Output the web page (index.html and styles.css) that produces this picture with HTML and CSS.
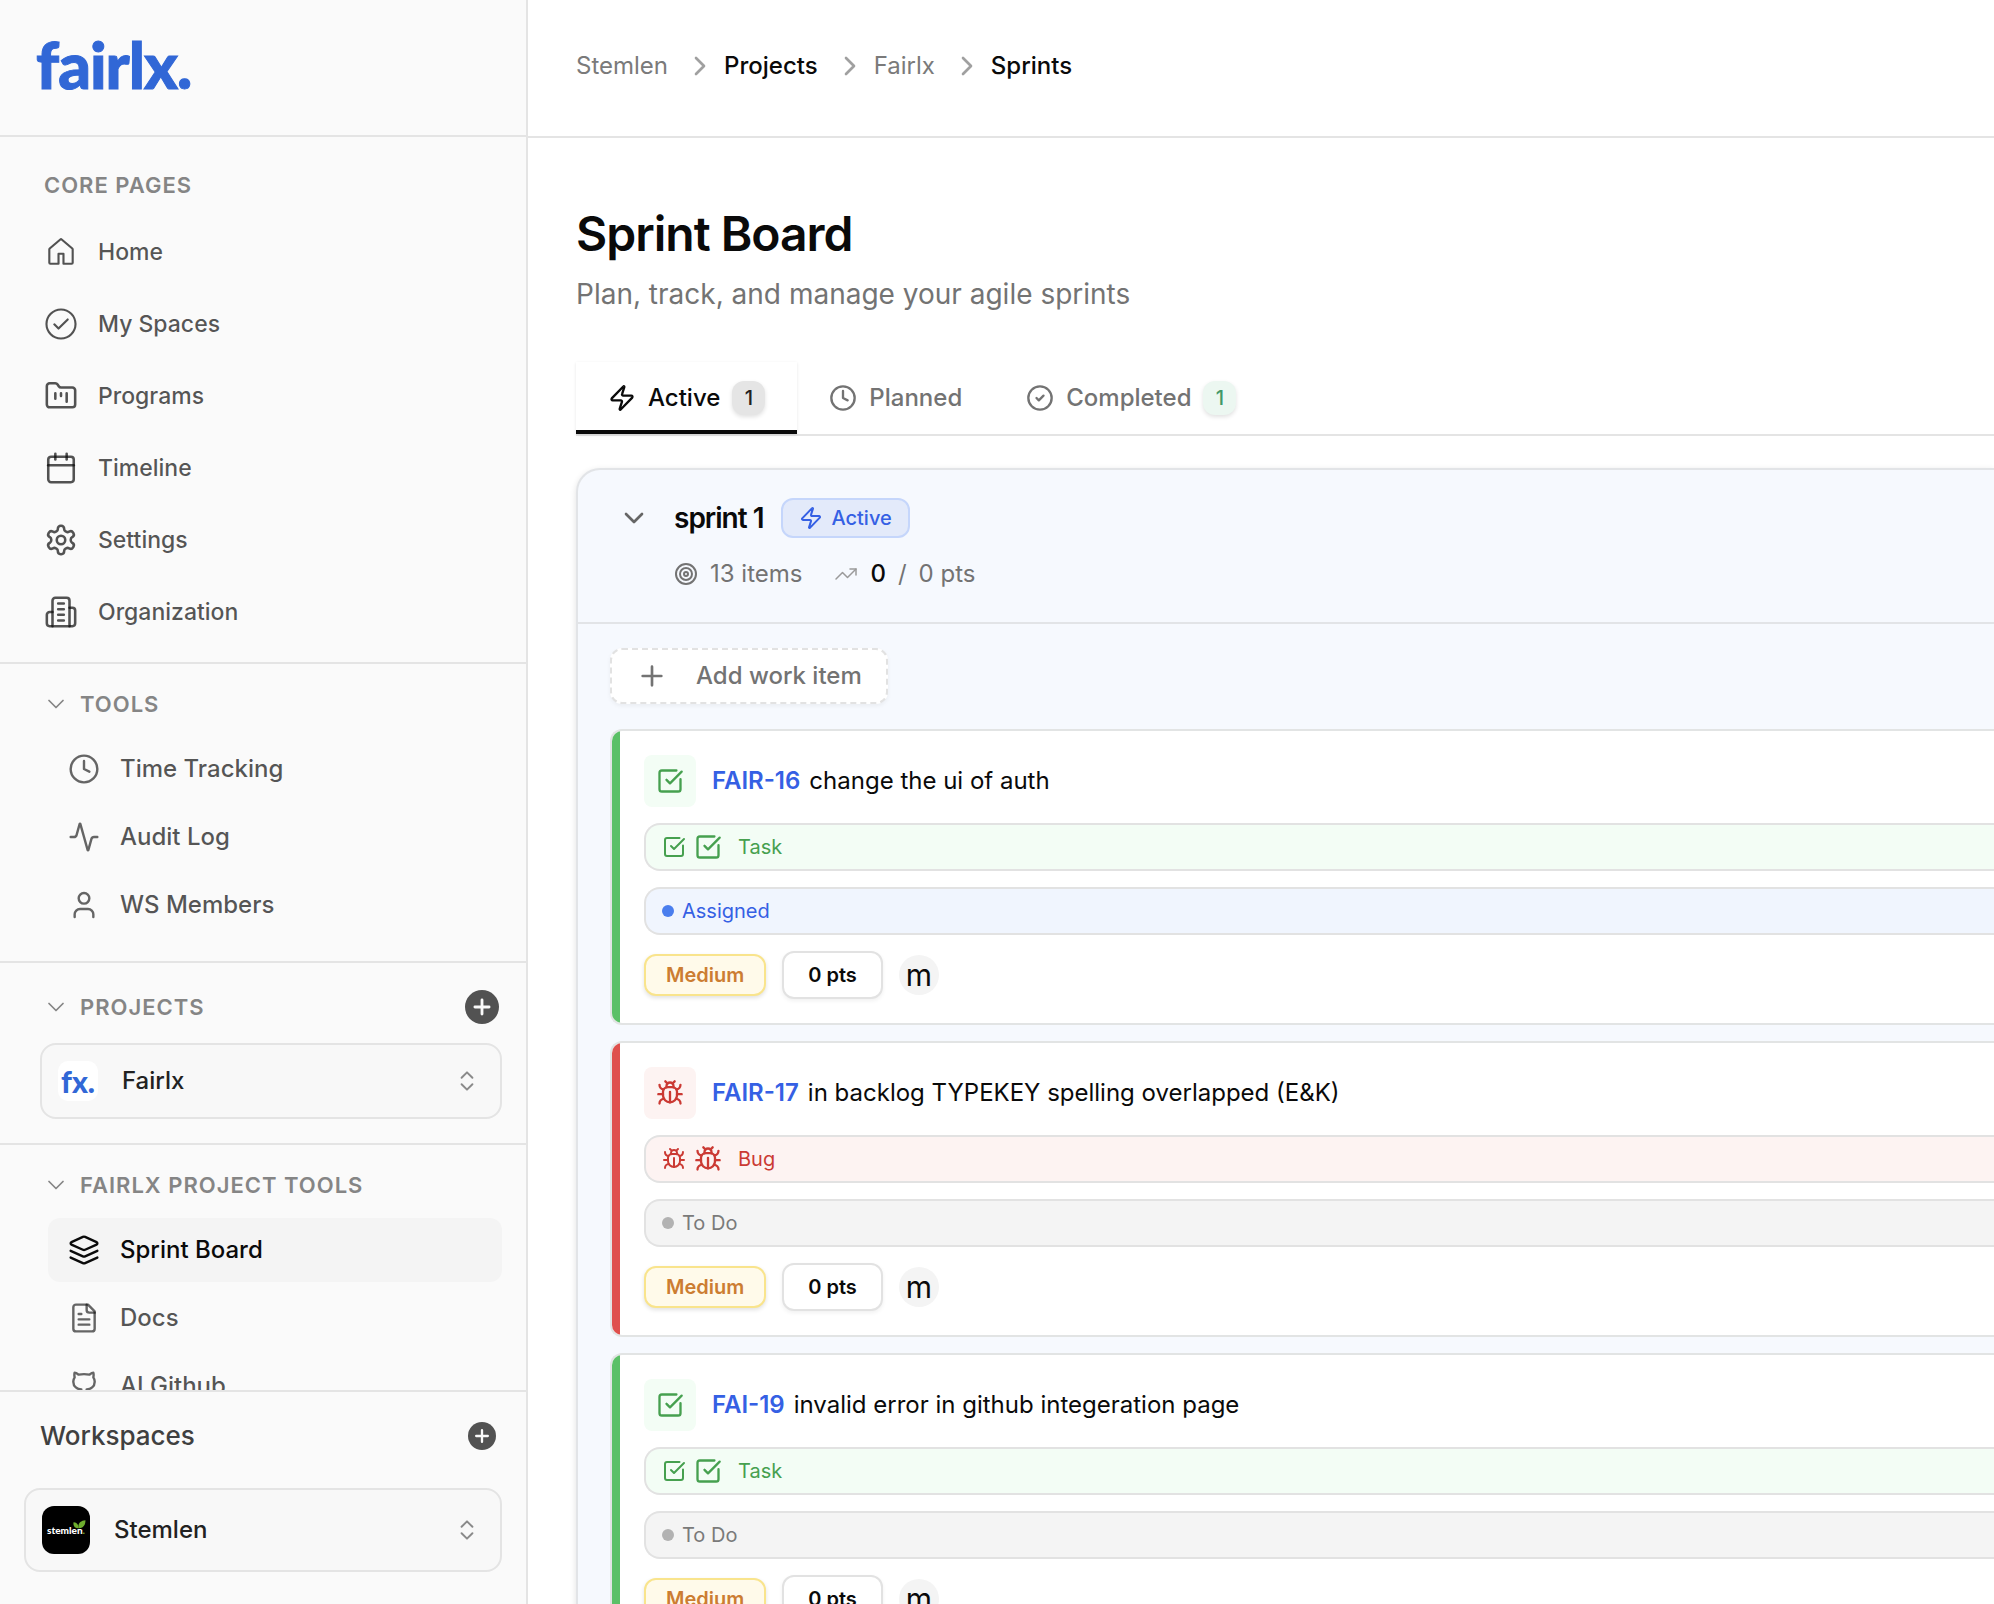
FILE: index.html
```html
<!DOCTYPE html>
<html lang="en">
	<head>
		<meta charset="UTF-8">
		<meta name="viewport" content="width=device-width, initial-scale=1">
		<title>Fairlx - Sprint Board</title>
		<link rel="stylesheet" href="styles.css">
	</head>
	<body>
		<!-- icon set -->
		<svg class="sprite" aria-hidden="true">
			<symbol id="home" viewBox="0 0 24 24"><path class="solid" d="M11.03 2.59a1.501 1.501 0 0 1 1.94 0l7.5 6.363a1.5 1.5 0 0 1 .53 1.144V19.5a1.5 1.5 0 0 1-1.5 1.5h-5.75a.75.75 0 0 1-.75-.75V14h-2v6.25a.75.75 0 0 1-.75.75H4.5A1.5 1.5 0 0 1 3 19.5v-9.403c0-.44.194-.859.53-1.144ZM12 3.734l-7.5 6.363V19.5h5v-6.25a.75.75 0 0 1 .75-.75h3.5a.75.75 0 0 1 .75.75v6.25h5v-9.403Z"/></symbol>
			<symbol id="check-round" viewBox="0 0 24 24"><path class="solid" d="M17.28 9.28a.75.75 0 0 0-1.06-1.06l-5.97 5.97-2.47-2.47a.75.75 0 0 0-1.06 1.06l3 3a.75.75 0 0 0 1.06 0l6.5-6.5Z"/><path class="solid" d="M12 1c6.075 0 11 4.925 11 11s-4.925 11-11 11S1 18.075 1 12 5.925 1 12 1ZM2.5 12a9.5 9.5 0 0 0 9.5 9.5 9.5 9.5 0 0 0 9.5-9.5A9.5 9.5 0 0 0 12 2.5 9.5 9.5 0 0 0 2.5 12Z"/></symbol>
			<symbol id="folder" viewBox="0 0 24 24"><path d="M4 20h16a2 2 0 0 0 2-2V8a2 2 0 0 0-2-2h-7.93a2 2 0 0 1-1.66-.9l-.82-1.2A2 2 0 0 0 7.93 3H4a2 2 0 0 0-2 2v13c0 1.1.9 2 2 2Z"/><path d="M8 10v4M12 10v2M16 10v6"/></symbol>
			<symbol id="calendar" viewBox="0 0 24 24"><path d="M8 2v4"/><path d="M16 2v4"/><rect x="3" y="4" width="18" height="18" rx="2"/><path d="M3 10h18"/></symbol>
			<symbol id="settings" viewBox="0 0 24 24"><path d="M12.22 2h-.44a2 2 0 0 0-2 2v.18a2 2 0 0 1-1 1.73l-.43.25a2 2 0 0 1-2 0l-.15-.08a2 2 0 0 0-2.73.73l-.22.38a2 2 0 0 0 .73 2.73l.15.1a2 2 0 0 1 1 1.72v.51a2 2 0 0 1-1 1.74l-.15.09a2 2 0 0 0-.73 2.73l.22.38a2 2 0 0 0 2.73.73l.15-.08a2 2 0 0 1 2 0l.43.25a2 2 0 0 1 1 1.73V20a2 2 0 0 0 2 2h.44a2 2 0 0 0 2-2v-.18a2 2 0 0 1 1-1.73l.43-.25a2 2 0 0 1 2 0l.15.08a2 2 0 0 0 2.73-.73l.22-.39a2 2 0 0 0-.73-2.73l-.15-.08a2 2 0 0 1-1-1.74v-.5a2 2 0 0 1 1-1.74l.15-.09a2 2 0 0 0 .73-2.73l-.22-.38a2 2 0 0 0-2.73-.73l-.15.08a2 2 0 0 1-2 0l-.43-.25a2 2 0 0 1-1-1.73V4a2 2 0 0 0-2-2z"/><circle cx="12" cy="12" r="3"/></symbol>
			<symbol id="building" viewBox="0 0 24 24"><path d="M6 22V4a2 2 0 0 1 2-2h8a2 2 0 0 1 2 2v18Z"/><path d="M6 12H4a2 2 0 0 0-2 2v6a2 2 0 0 0 2 2h2"/><path d="M18 9h2a2 2 0 0 1 2 2v9a2 2 0 0 1-2 2h-2"/><path d="M10 6h4M10 10h4M10 14h4M10 18h4"/></symbol>
			<symbol id="clock" viewBox="0 0 24 24"><circle cx="12" cy="12" r="10"/><path d="M12 6v6l4 2"/></symbol>
			<symbol id="activity" viewBox="0 0 24 24"><path d="M22 12h-2.48a2 2 0 0 0-1.93 1.46l-2.35 8.36a.25.25 0 0 1-.48 0L9.24 2.18a.25.25 0 0 0-.48 0l-2.35 8.36A2 2 0 0 1 4.49 12H2"/></symbol>
			<symbol id="user" viewBox="0 0 24 24"><path d="M19 21v-2a4 4 0 0 0-4-4H9a4 4 0 0 0-4 4v2"/><circle cx="12" cy="7" r="4"/></symbol>
			<symbol id="layers" viewBox="0 0 24 24"><path d="M12.83 2.18a2 2 0 0 0-1.66 0L2.6 6.08a1 1 0 0 0 0 1.83l8.58 3.91a2 2 0 0 0 1.66 0l8.58-3.9a1 1 0 0 0 0-1.83Z"/><path d="M22 17.65l-9.17 4.16a2 2 0 0 1-1.66 0L2 17.65"/><path d="M22 12.65l-9.17 4.16a2 2 0 0 1-1.66 0L2 12.65"/></symbol>
			<symbol id="file" viewBox="0 0 24 24"><path d="M15 2H6a2 2 0 0 0-2 2v16a2 2 0 0 0 2 2h12a2 2 0 0 0 2-2V7Z"/><path d="M14 2v4a2 2 0 0 0 2 2h4"/><path d="M10 9H8M16 13H8M16 17H8"/></symbol>
			<symbol id="github" viewBox="0 0 24 24"><path d="M15 22v-4a4.8 4.8 0 0 0-1-3.5c3 0 6-2 6-5.5.08-1.25-.27-2.48-1-3.5.28-1.15.28-2.35 0-3.5 0 0-1 0-3 1.5-2.64-.5-5.36-.5-8 0C6 2 5 2 5 2c-.3 1.15-.3 2.35 0 3.5A5.403 5.403 0 0 0 4 9c0 3.5 3 5.5 6 5.5-.39.49-.68 1.05-.85 1.65-.17.6-.22 1.23-.15 1.85v4"/><path d="M9 18c-4.51 2-5-2-7-2"/></symbol>
			<symbol id="down" viewBox="0 0 24 24"><path d="M6 9l6 6 6-6"/></symbol>
			<symbol id="right" viewBox="0 0 24 24"><path d="M9 18l6-6-6-6"/></symbol>
			<symbol id="updown" viewBox="0 0 24 24"><path d="M7 15l5 5 5-5M7 9l5-5 5 5"/></symbol>
			<symbol id="plus" viewBox="0 0 24 24"><path d="M5 12h14M12 5v14"/></symbol>
			<symbol id="plus-disc" viewBox="0 0 24 24"><circle class="solid" cx="12" cy="12" r="12"/><path class="cross" d="M7 12h10M12 7v10"/></symbol>
			<symbol id="zap" viewBox="0 0 24 24"><path d="M4 14a1 1 0 0 1-.78-1.63l9.9-10.2a.5.5 0 0 1 .86.46l-1.92 6.02A1 1 0 0 0 13 10h7a1 1 0 0 1 .78 1.63l-9.9 10.2a.5.5 0 0 1-.86-.46l1.92-6.02A1 1 0 0 0 11 14z"/></symbol>
			<symbol id="done" viewBox="0 0 24 24"><circle cx="12" cy="12" r="10"/><path d="M9 12l2 2 4-4"/></symbol>
			<symbol id="target" viewBox="0 0 24 24"><circle cx="12" cy="12" r="10"/><circle cx="12" cy="12" r="6"/><circle cx="12" cy="12" r="2"/></symbol>
			<symbol id="trend" viewBox="0 0 24 24"><path d="M22 7l-8.5 8.5-5-5L2 17"/><path d="M16 7h6v6"/></symbol>
			<symbol id="task" viewBox="0 0 24 24"><path d="M21 10.5V19a2 2 0 0 1-2 2H5a2 2 0 0 1-2-2V5a2 2 0 0 1 2-2h12.5"/><path d="M9 11l3 3L22 4"/></symbol>
			<symbol id="bug" viewBox="0 0 24 24"><path d="M8 2l1.88 1.88M14.12 3.88L16 2M9 7.13v-1a3.003 3.003 0 1 1 6 0v1"/><path d="M12 20c-3.3 0-6-2.7-6-6v-3a4 4 0 0 1 4-4h4a4 4 0 0 1 4 4v3c0 3.3-2.7 6-6 6"/><path d="M12 20v-9M6.53 9C4.6 8.8 3 7.1 3 5M6 13H2M3 21c0-2.1 1.7-3.9 3.8-4M20.97 5c0 2.1-1.6 3.8-3.5 4M22 13h-4M17.2 17c2.1.1 3.8 1.9 3.8 4"/></symbol>
		</svg>

		<div class="app">
			<aside class="sidebar">
				<div class="side-head">
					<a href="#" class="logo">fairlx.</a>
				</div>
				<div class="side-scroll">
					<nav class="core">
						<h2 class="label">CORE PAGES</h2>
						<ul>
							<li><a href="#"><svg class="icon"><use href="#home"/></svg>Home</a></li>
							<li><a href="#"><svg class="icon"><use href="#check-round"/></svg>My Spaces</a></li>
							<li><a href="#"><svg class="icon"><use href="#folder"/></svg>Programs</a></li>
							<li><a href="#"><svg class="icon"><use href="#calendar"/></svg>Timeline</a></li>
							<li><a href="#"><svg class="icon"><use href="#settings"/></svg>Settings</a></li>
							<li><a href="#"><svg class="icon"><use href="#building"/></svg>Organization</a></li>
						</ul>
					</nav>
					<section class="group">
						<button class="label toggle"><svg class="icon"><use href="#down"/></svg>TOOLS</button>
						<ul class="sub">
							<li><a href="#"><svg class="icon"><use href="#clock"/></svg>Time Tracking</a></li>
							<li><a href="#"><svg class="icon"><use href="#activity"/></svg>Audit Log</a></li>
							<li><a href="#"><svg class="icon"><use href="#user"/></svg>WS Members</a></li>
						</ul>
					</section>
					<section class="group projects">
						<div class="row">
							<button class="label toggle"><svg class="icon"><use href="#down"/></svg>PROJECTS</button>
							<button class="add" aria-label="New project"><svg class="icon"><use href="#plus-disc"/></svg></button>
						</div>
						<div class="picker">
							<span class="mark fx">fx.</span>
							<select aria-label="Project"><option>Fairlx</option></select>
							<svg class="icon"><use href="#updown"/></svg>
						</div>
					</section>
					<section class="group">
						<button class="label toggle"><svg class="icon"><use href="#down"/></svg>FAIRLX PROJECT TOOLS</button>
						<ul class="sub">
							<li><a href="#" class="on"><svg class="icon"><use href="#layers"/></svg>Sprint Board</a></li>
							<li><a href="#"><svg class="icon"><use href="#file"/></svg>Docs</a></li>
							<li><a href="#"><svg class="icon"><use href="#github"/></svg>AI Github</a></li>
						</ul>
					</section>
				</div>
				<div class="side-foot">
					<div class="row">
						<label for="workspace">Workspaces</label>
						<button class="add small" aria-label="New workspace"><svg class="icon"><use href="#plus-disc"/></svg></button>
					</div>
					<div class="picker large">
						<span class="mark stemlen">
							stemlen<i>.</i>
							<svg class="leaf" viewBox="0 0 24 16"><path d="M10 15C3 15 0 11 1 4c6 0 9 4 9 11z"/><path d="M10 15C9 6 13 1 23 0c0 9-4 15-13 15z"/></svg>
						</span>
						<select id="workspace"><option>Stemlen</option></select>
						<svg class="icon"><use href="#updown"/></svg>
					</div>
				</div>
			</aside>

			<main>
				<header class="topbar">
					<ol class="crumbs">
						<li><a href="#">Stemlen</a></li>
						<li><svg class="icon"><use href="#right"/></svg><a href="#" class="strong">Projects</a></li>
						<li><svg class="icon"><use href="#right"/></svg><a href="#">Fairlx</a></li>
						<li><svg class="icon"><use href="#right"/></svg><a href="#" class="strong">Sprints</a></li>
					</ol>
				</header>
				<div class="content">
					<h1>Sprint Board</h1>
					<p class="lead">Plan, track, and manage your agile sprints</p>
					<div class="tabs" role="tablist">
						<button role="tab" aria-selected="true"><svg class="icon"><use href="#zap"/></svg>Active<span class="count">1</span></button>
						<button role="tab"><svg class="icon"><use href="#clock"/></svg>Planned</button>
						<button role="tab"><svg class="icon"><use href="#done"/></svg>Completed<span class="count green">1</span></button>
					</div>

					<section class="sprint">
						<div class="sprint-head">
							<button class="fold" aria-label="Collapse sprint"><svg class="icon"><use href="#down"/></svg></button>
							<div>
								<div class="sprint-title">
									<h2>sprint 1</h2>
									<span class="state"><svg class="icon"><use href="#zap"/></svg>Active</span>
								</div>
								<div class="stats">
									<svg class="icon"><use href="#target"/></svg><span>13 items</span>
									<svg class="icon trend"><use href="#trend"/></svg><b>0</b><span>/</span><span>0 pts</span>
								</div>
							</div>
						</div>
						<div class="sprint-body">
							<button class="add-item"><svg class="icon"><use href="#plus"/></svg>Add work item</button>

							<article class="item task">
								<div class="item-title">
									<span class="tile"><svg class="icon"><use href="#task"/></svg></span>
									<a href="#">FAIR-16</a>
									<h3>change the ui of auth</h3>
								</div>
								<button class="field type"><svg class="icon"><use href="#task"/></svg><svg class="icon big"><use href="#task"/></svg>Task</button>
								<button class="field assigned"><i class="dot"></i>Assigned</button>
								<div class="meta">
									<span class="priority">Medium</span>
									<button class="points">0 pts</button>
									<span class="avatar">m</span>
								</div>
							</article>

							<article class="item bug">
								<div class="item-title">
									<span class="tile"><svg class="icon"><use href="#bug"/></svg></span>
									<a href="#">FAIR-17</a>
									<h3>in backlog TYPEKEY spelling overlapped (E&amp;K)</h3>
								</div>
								<button class="field type"><svg class="icon"><use href="#bug"/></svg><svg class="icon big"><use href="#bug"/></svg>Bug</button>
								<button class="field todo"><i class="dot"></i>To Do</button>
								<div class="meta">
									<span class="priority">Medium</span>
									<button class="points">0 pts</button>
									<span class="avatar">m</span>
								</div>
							</article>

							<article class="item task">
								<div class="item-title">
									<span class="tile"><svg class="icon"><use href="#task"/></svg></span>
									<a href="#">FAI-19</a>
									<h3>invalid error in github integeration page</h3>
								</div>
								<button class="field type"><svg class="icon"><use href="#task"/></svg><svg class="icon big"><use href="#task"/></svg>Task</button>
								<button class="field todo"><i class="dot"></i>To Do</button>
								<div class="meta">
									<span class="priority">Medium</span>
									<button class="points">0 pts</button>
									<span class="avatar">m</span>
								</div>
							</article>
						</div>
					</section>
				</div>
			</main>
		</div>
	</body>
</html>
```
FILE: styles.css
```css
*{
	margin: 0;
	padding: 0;
	box-sizing: border-box;
}
body{
	font-family: Inter, "Liberation Sans", sans-serif;
	font-size: 24px;
	line-height: 32px;
	color: #0a0a0a;
	background: #fff;
}
ul,ol{
	list-style: none;
}
a{
	color: inherit;
	text-decoration: none;
}
button,select{
	font: inherit;
	color: inherit;
	border: 0;
	background: none;
	cursor: pointer;
}
.sprite{
	display: none;
}
.icon{
	width: 28px;
	height: 28px;
	flex: none;
	fill: none;
	stroke: currentColor;
	stroke-width: 2;
	stroke-linecap: round;
	stroke-linejoin: round;
}
.solid{
	fill: currentColor;
	stroke: none;
}
.cross{
	stroke: #fafafa;
}
.app{
	display: flex;
	height: 100vh;
	overflow: hidden;
}

/* sidebar */
.sidebar{
	width: 528px;
	flex: none;
	display: flex;
	flex-direction: column;
	background: #fafafa;
	border-right: 2px solid #e4e4e4;
}
.side-head{
	height: 137px;
	flex: none;
	display: flex;
	align-items: center;
	padding: 0 36px 6px;
	border-bottom: 2px solid #e4e4e4;
}
.logo{
	font-family: Lato, sans-serif;
	font-size: 64px;
	line-height: 80px;
	font-weight: 900;
	letter-spacing: -1px;
	color: #3167d6;
	-webkit-text-stroke: 1px #3167d6;
}
.side-scroll{
	flex: 1;
	min-height: 0;
	overflow: hidden;
}
.label{
	font-size: 22px;
	line-height: 32px;
	font-weight: 600;
	letter-spacing: 1px;
	color: #858585;
}
.core{
	padding: 32px 24px 14px 44px;
}
.core ul{
	margin-top: 15px;
}
.core a{
	display: flex;
	align-items: center;
	gap: 20px;
	height: 72px;
	font-size: 23px;
	font-weight: 500;
	color: rgba(10,10,10,.7);
}
.core .icon{
	width: 34px;
	height: 34px;
	stroke-width: 1.8;
}
.group{
	padding: 24px 24px 24px 48px;
	border-top: 2px solid #e4e4e4;
}
.toggle{
	display: flex;
	align-items: center;
	gap: 10px;
	margin-left: -6px;
}
.toggle .icon{
	stroke-width: 1.5;
}
.sub{
	display: grid;
	gap: 4px;
	margin-top: 17px;
}
.sub a{
	display: flex;
	align-items: center;
	gap: 20px;
	height: 64px;
	padding: 0 20px;
	border-radius: 12px;
	font-weight: 500;
	color: rgba(10,10,10,.7);
}
.sub .icon{
	width: 32px;
	height: 32px;
	color: rgba(10,10,10,.62);
	stroke-width: 1.8;
}
.sub .on{
	background: #f4f4f4;
}
.sub .on,.sub .on .icon{
	color: #0a0a0a;
}
.row{
	display: flex;
	align-items: center;
	justify-content: space-between;
	height: 40px;
}
.projects{
	padding-left: 40px;
}
.projects .toggle{
	margin-left: 2px;
}
.add{
	width: 34px;
	height: 34px;
	margin-right: 3px;
	display: flex;
	align-items: center;
	justify-content: center;
	color: #525252;
}
.add .icon{
	width: 34px;
	height: 34px;
}
.small .icon{
	width: 28px;
	height: 28px;
}
.picker{
	display: flex;
	align-items: center;
	height: 76px;
	margin-top: 16px;
	padding: 0 20px 0 16px;
	border: 2px solid #e4e4e4;
	border-radius: 16px;
	background: #f8f8f8;
}
.picker select{
	flex: 1;
	height: 40px;
	margin-left: 24px;
	appearance: none;
	font-weight: 500;
	color: #222;
}
.picker .icon{
	width: 26px;
	height: 26px;
	color: #8a8a8a;
	stroke-width: 1.8;
}
.mark{
	width: 40px;
	height: 40px;
	display: flex;
	align-items: center;
	justify-content: center;
	border-radius: 10px;
	font-family: Lato, sans-serif;
	font-weight: 900;
}
.fx{
	background: #fff;
	font-size: 30px;
	color: #3167d6;
}
.stemlen{
	width: 48px;
	height: 48px;
	position: relative;
	border-radius: 12px;
	background: #000;
	font-size: 10px;
	color: #fff;
}
.stemlen i{
	font-style: normal;
	color: #6fae2e;
}
.leaf{
	position: absolute;
	top: 14px;
	right: 4px;
	width: 13px;
	height: 9px;
	fill: #6fae2e;
}
.side-foot{
	flex: none;
	padding: 24px 24px 32px;
	border-top: 2px solid #e4e4e4;
}
.side-foot label{
	margin-left: 16px;
	font-size: 26px;
	font-weight: 500;
	color: #404040;
}
.large{
	height: 84px;
	margin-top: 32px;
}

/* main column */
main{
	flex: 1;
	min-width: 0;
}
.topbar{
	height: 138px;
	display: flex;
	align-items: center;
	padding: 0 0 4px 48px;
	border-bottom: 2px solid #e4e4e4;
}
.crumbs,.crumbs li{
	display: flex;
	align-items: center;
	gap: 8px;
	color: #7a7a7a;
}
.crumbs{
	gap: 16px;
}
.crumbs .icon{
	width: 32px;
	height: 32px;
	color: #a0a0a0;
}
.crumbs .strong{
	font-weight: 500;
	color: #0a0a0a;
}
.content{
	padding: 68px 0 0 48px;
}
h1{
	font-size: 48px;
	line-height: 56px;
	font-weight: 600;
	letter-spacing: -1px;
}
.lead{
	margin-top: 12px;
	font-size: 28px;
	line-height: 40px;
	color: #737373;
}
.tabs{
	display: flex;
	margin-top: 48px;
	border-bottom: 2px solid #e4e4e4;
}
.tabs button{
	display: flex;
	align-items: center;
	gap: 12px;
	height: 72px;
	padding: 4px 32px 0;
	border-bottom: 4px solid transparent;
	font-weight: 500;
	color: #737373;
}
.tabs [aria-selected=true]{
	border-bottom-color: #0a0a0a;
	color: #0a0a0a;
	box-shadow: 0 1px 3px rgba(0,0,0,.1);
}
.count{
	min-width: 33px;
	height: 34px;
	border-radius: 12px;
	background: #e5e5e5;
	font-size: 20px;
	line-height: 34px;
	text-align: center;
	color: #222;
	box-shadow: 0 2px 4px rgba(0,0,0,.12);
}
.green{
	background: #ecf7f1;
	color: #43976a;
}
.sprint{
	margin-top: 32px;
	border: 2px solid #e2e4e7;
	border-right: 0;
	border-radius: 24px 0 0 0;
	background: #f6f9fe;
	box-shadow: 0 2px 6px rgba(0,0,0,.12);
}
.sprint-head{
	display: flex;
	gap: 24px;
	height: 154px;
	padding: 28px 40px;
	border-bottom: 2px solid #e2e4e7;
}
.fold{
	width: 32px;
	height: 40px;
	color: #666;
}
.fold .icon{
	width: 32px;
	height: 32px;
	display: block;
}
.sprint-title{
	display: flex;
	align-items: center;
	gap: 18px;
}
.sprint-title h2{
	font-size: 28px;
	line-height: 40px;
	font-weight: 600;
	letter-spacing: -1px;
}
.state{
	display: flex;
	align-items: center;
	gap: 8px;
	height: 40px;
	padding: 0 16px;
	border: 2px solid #c5d6fb;
	border-radius: 12px;
	background: #e3eafa;
	font-size: 20px;
	font-weight: 500;
	color: #3560e4;
}
.state .icon,.stats .icon{
	width: 24px;
	height: 24px;
}
.stats{
	display: flex;
	align-items: center;
	gap: 12px;
	margin-top: 20px;
	color: #737373;
}
.stats .trend{
	margin-left: 20px;
	color: #9a9a9a;
	stroke-width: 1.5;
}
.stats b{
	font-weight: 500;
	color: #0a0a0a;
}
.sprint-body{
	padding: 24px 0 24px 32px;
}
.add-item{
	display: flex;
	align-items: center;
	gap: 28px;
	height: 56px;
	padding: 0 24px;
	border: 2px dashed #e2e2e2;
	border-radius: 12px;
	background: #fff;
	font-weight: 500;
	color: #737373;
	box-shadow: 0 2px 4px rgba(0,0,0,.05);
}
.add-item .icon{
	width: 32px;
	height: 32px;
}

/* work items */
.item{
	position: relative;
	display: grid;
	gap: 16px;
	margin-top: 16px;
	padding: 24px 0 24px 32px;
	border: 2px solid #e2e4e4;
	border-right: 0;
	border-radius: 12px 0 0 12px;
	background: #fff;
	overflow: hidden;
}
.add-item + .item{
	margin-top: 25px;
}
.item::before{
	content: "";
	position: absolute;
	top: 0;
	bottom: 0;
	left: 0;
	width: 8px;
	background: #5bc067;
}
.item.bug::before{
	background: #df504d;
}
.item-title{
	display: flex;
	align-items: center;
}
.tile{
	width: 52px;
	height: 52px;
	display: flex;
	align-items: center;
	justify-content: center;
	margin-right: 16px;
	border-radius: 8px;
}
.item-title a{
	margin-right: 9px;
	font-weight: 600;
	color: #3560e4;
}
.item-title a,h3{
	line-height: 34px;
}
h3{
	font-size: 24px;
	font-weight: 400;
}
.task .tile,.task .type{
	background: #f3fdf5;
	color: #46a04f;
}
.bug .tile,.bug .type{
	background: #fdf3f2;
	color: #cb3a34;
}
.field{
	display: flex;
	align-items: center;
	height: 48px;
	padding: 0 16px;
	border: 2px solid #e2e2e2;
	border-right: 0;
	border-radius: 16px 0 0 16px;
	font-size: 20px;
}
.field .icon{
	width: 24px;
	height: 24px;
	margin-right: 8px;
}
.field .big{
	width: 28px;
	height: 28px;
	margin-right: 16px;
}
.dot{
	width: 12px;
	height: 12px;
	margin-right: 8px;
	border-radius: 50%;
	background: #b2b2b2;
}
.assigned{
	background: #f0f5fe;
	color: #3560e4;
}
.assigned .dot{
	background: #4a7eee;
}
.todo{
	background: #f4f4f4;
	color: #7a7a7a;
}
.meta{
	display: flex;
	align-items: center;
	gap: 16px;
	height: 48px;
}
.priority,.points{
	height: 42px;
	padding: 0 20px;
	border: 2px solid #f9e48c;
	border-radius: 12px;
	background: #fffaea;
	font-size: 20px;
	line-height: 38px;
	font-weight: 600;
	color: #cc7d32;
	box-shadow: 0 2px 4px rgba(0,0,0,.12);
}
.points{
	height: 48px;
	padding: 0 24px;
	border-color: #e2e2e2;
	background: #fff;
	color: #0a0a0a;
	box-shadow: 0 2px 4px rgba(0,0,0,.06);
}
.avatar{
	width: 40px;
	height: 40px;
	border-radius: 50%;
	background: #f4f4f4;
	font-size: 30px;
	line-height: 40px;
	text-align: center;
}
```
